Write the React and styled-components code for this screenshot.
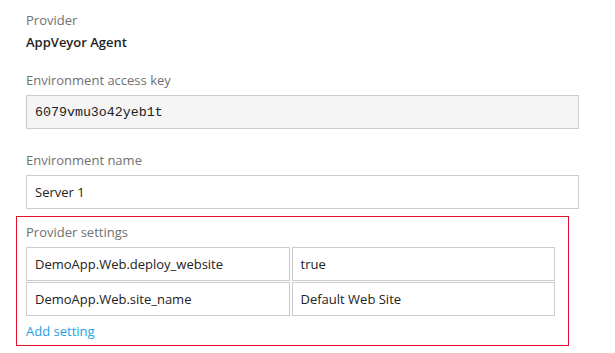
import React from "react";
import styled, { createGlobalStyle } from "styled-components";

const GlobalStyle = createGlobalStyle`
  body {
    margin: 0;
    background: #fff;
    font-family: "Open Sans", "Noto Sans", Arial, sans-serif;
    font-size: 13px;
    color: #222;
  }
`;

const Page = styled.div`
  width: 553px;
  padding: 11px 0 0 26px;
`;

const Field = styled.div`
  margin-bottom: ${(p) => p.gap || 22}px;
`;

const Label = styled.div`
  color: #707070;
  line-height: 18px;
  margin-bottom: ${(p) => (p.tight ? 4 : 6)}px;
`;

const Value = styled.div`
  font-weight: 600;
  color: #1e1e1e;
  line-height: 18px;
`;

const Input = styled.div`
  box-sizing: border-box;
  height: 34px;
  border: 1px solid #cccccc;
  background: ${(p) => (p.readOnly ? "#f5f5f5" : "#fff")};
  padding: 0 8px;
  display: flex;
  align-items: center;
  color: #222;
  font-family: ${(p) =>
    p.mono ? '"Liberation Mono", "DejaVu Sans Mono", monospace' : "inherit"};
  font-size: ${(p) => (p.mono ? "13.3px" : "13px")};
  white-space: nowrap;
  overflow: hidden;
`;

const SettingsBox = styled.div`
  margin: 0 10px 0 -10px;
  border: 1px solid #e4112f;
  padding: 6px 13px 5px 9px;
`;

const SettingsGrid = styled.div`
  display: grid;
  grid-template-columns: 1fr 1fr;
  gap: 1px 2px;
  margin-bottom: 6px;
`;

const AddLink = styled.a`
  display: block;
  color: #1ba1e2;
  line-height: 18px;
  text-decoration: none;
  cursor: pointer;
`;

const settings = [
  { name: "DemoApp.Web.deploy_website", value: "true" },
  { name: "DemoApp.Web.site_name", value: "Default Web Site" },
];

export default function App() {
  return (
    <>
      <GlobalStyle />
      <Page>
        <Field gap={20}>
          <Label tight>Provider</Label>
          <Value>AppVeyor Agent</Value>
        </Field>
        <Field>
          <Label>Environment access key</Label>
          <Input readOnly mono>
            6079vmu3o42yeb1t
          </Input>
        </Field>
        <Field gap={7}>
          <Label>Environment name</Label>
          <Input>Server 1</Input>
        </Field>
        <SettingsBox>
          <Label>Provider settings</Label>
          <SettingsGrid>
            {settings.map((s) => (
              <React.Fragment key={s.name}>
                <Input>{s.name}</Input>
                <Input>{s.value}</Input>
              </React.Fragment>
            ))}
          </SettingsGrid>
          <AddLink>Add setting</AddLink>
        </SettingsBox>
      </Page>
    </>
  );
}
